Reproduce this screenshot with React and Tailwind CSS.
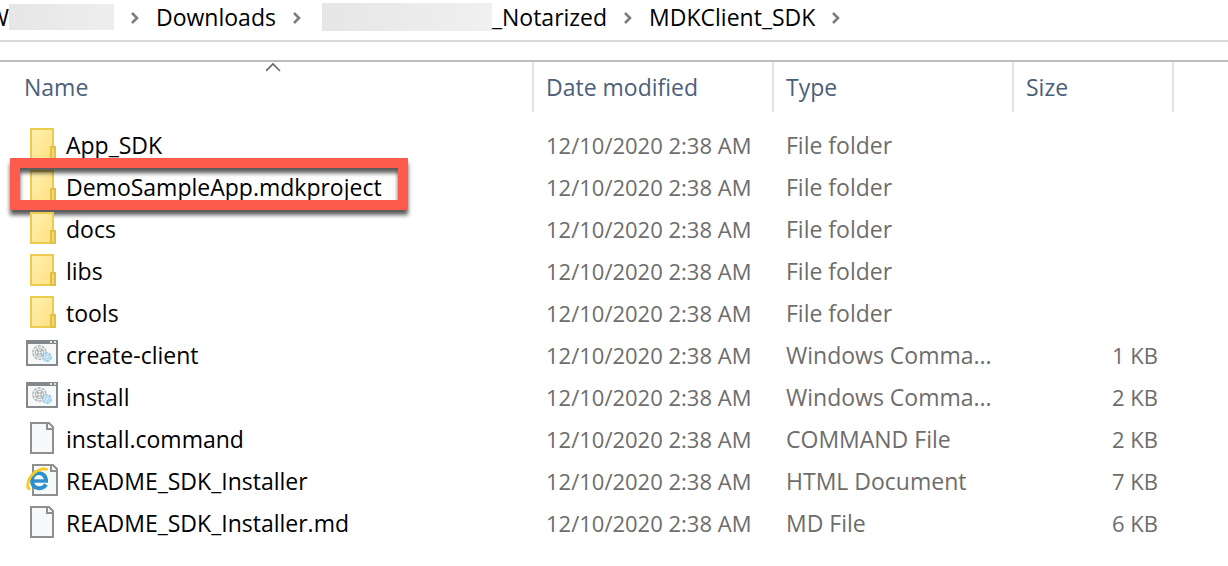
import React from "react";

function FolderIcon() {
  return (
    <svg width="32" height="34" viewBox="0 0 32 34" aria-hidden="true">
      <defs>
        <linearGradient id="folder" x1="0" y1="0" x2="1" y2="1">
          <stop offset="0" stopColor="#fff0b0" />
          <stop offset="1" stopColor="#ffe082" />
        </linearGradient>
      </defs>
      <path d="M5 2H27V32H5Z" fill="url(#folder)" stroke="#ebcb50" strokeWidth="2" />
      <path d="M25 20H29V32H25Z" fill="#f5d673" stroke="#e3bf46" strokeWidth="2" />
    </svg>
  );
}

function CommandIcon() {
  return (
    <svg width="32" height="34" viewBox="0 2 32 34" aria-hidden="true">
      <path d="M1 6H31V30H1Z" fill="#f7f8f8" stroke="#82888c" strokeWidth="2" />
      <path d="M0 5H32V9H0Z" fill="#82888c" />
      <path d="M24 6h2v2h-2zM28 6h2v2h-2z" fill="#dfe3e5" />
      <circle cx="13.500" cy="17.500" r="6.500" fill="#f4f5f5" stroke="#bcc0c2" strokeWidth="2" strokeDasharray="3 1" />
      <circle cx="13.500" cy="17.500" r="4" fill="none" stroke="#b0b4b7" strokeWidth="1.200" />
      <path d="M10.500 14.500L16.500 20.500M16.500 14.500L10.500 20.500" stroke="#a2a7aa" strokeWidth="1.200" />
      <circle cx="13.500" cy="17.500" r="1.600" fill="#fff" stroke="#a2a7aa" />
      <circle cx="21" cy="22" r="4" fill="#cfe9f7" stroke="#9fcce4" strokeWidth="2" strokeDasharray="3 1" />
      <circle cx="21" cy="22" r="1.500" fill="#eef8fd" stroke="#a7d2e8" />
    </svg>
  );
}

function FileIcon() {
  return (
    <svg width="32" height="34" viewBox="0 0 32 34" aria-hidden="true">
      <path d="M5 2H23L27 6V32H5Z" fill="#f8f9fa" stroke="#8f8f8f" strokeWidth="2" />
      <path d="M21 2V8H27" fill="none" stroke="#8f8f8f" strokeWidth="2" />
    </svg>
  );
}

function HtmlIcon() {
  return (
    <svg width="32" height="34" viewBox="0 0 32 34" aria-hidden="true">
      <path d="M7 2H27L31 6V32H7Z" fill="#f8f9fa" stroke="#8f8f8f" strokeWidth="2" />
      <path d="M25 2V8H31" fill="none" stroke="#8f8f8f" strokeWidth="2" />
      <path d="M20 18.500C20.500 7.500 6 7.500 6 17.500C6 27 17 27 20 21.500" fill="none" stroke="#2b8fd0" strokeWidth="4" />
      <path d="M6 18H22" stroke="#2b8fd0" strokeWidth="3.400" />
      <path d="M4 26.500C-1 24 3 13 10 8.500C15 5.500 20 5 21.500 7" fill="none" stroke="#f5cb1c" strokeWidth="2.800" />
    </svg>
  );
}

function Chevron() {
  return (
    <svg className="shrink-0" width="10" height="14" viewBox="0 0 10 14" aria-hidden="true">
      <path d="M2 3L7 8L2 13" fill="none" stroke="#7d7d7d" strokeWidth="2.600" />
    </svg>
  );
}

const icons = { folder: FolderIcon, command: CommandIcon, file: FileIcon, html: HtmlIcon };

const files = [
  { name: "App_SDK", icon: "folder", type: "File folder", size: "" },
  { name: "DemoSampleApp.mdkproject", icon: "folder", type: "File folder", size: "", marked: true },
  { name: "docs", icon: "folder", type: "File folder", size: "" },
  { name: "libs", icon: "folder", type: "File folder", size: "" },
  { name: "tools", icon: "folder", type: "File folder", size: "" },
  { name: "create-client", icon: "command", type: "Windows Comma...", size: "1 KB" },
  { name: "install", icon: "command", type: "Windows Comma...", size: "2 KB" },
  { name: "install.command", icon: "file", type: "COMMAND File", size: "2 KB" },
  { name: "README_SDK_Installer", icon: "html", type: "HTML Document", size: "7 KB" },
  { name: "README_SDK_Installer.md", icon: "file", type: "MD File", size: "6 KB" },
];

function Breadcrumbs() {
  return (
    <nav aria-label="Path" className="flex h-[42px] items-center gap-4 overflow-hidden border-b-2 border-[#d9d9d9] pb-1.5 text-black">
      <a href="#root" className="flex shrink-0 items-center">
        <span className="flex w-[9px] justify-end">W</span>
        <span className="z-10 h-[26px] w-[105px] bg-gradient-to-r from-[#e6e6e6] to-[#eeeeee]" />
      </a>
      <Chevron />
      <a href="#downloads">Downloads</a>
      <Chevron />
      <a href="#notarized" className="flex shrink-0 items-center pl-1">
        <span className="h-7 w-[170px] bg-gradient-to-r from-[#e6e6e6] to-[#f0f0f0]" />
        _Notarized
      </a>
      <Chevron />
      <a href="#sdk">MDKClient_SDK</a>
      <Chevron />
    </nav>
  );
}

function HeaderCell({ label, sorted }) {
  return (
    <th scope="col" aria-sort={sorted ? "ascending" : undefined} className="relative border-r-2 border-[#e2e2e2] p-0 text-left font-normal">
      <button type="button" className={sorted ? "block h-[50px] w-full pl-6 text-left" : "block h-[50px] w-full pl-3 text-left"}>
        {label}
      </button>
      {sorted && (
        <svg className="absolute left-1/2 top-0" width="16" height="10" viewBox="0 0 16 10" aria-hidden="true">
          <path d="M0 9L7 2L14 9" fill="none" stroke="#666" strokeWidth="1.600" />
        </svg>
      )}
    </th>
  );
}

function FileRow({ file }) {
  const Icon = icons[file.icon];
  return (
    <tr className="h-[42px]">
      <td className="relative p-0">
        <div className="flex items-center gap-2 pl-[26px] text-black">
          <Icon />
          <span className="pt-0.5">{file.name}</span>
        </div>
        {file.marked && (
          <div className="absolute -top-[7px] left-[10px] h-[52px] w-[398px] border-[10px] border-[#ff5b4c] drop-shadow-[0_5px_2px_rgba(0,0,0,0.65)]" />
        )}
      </td>
      <td className="p-0 pl-3 pt-0.5 text-[22px]">12/10/2020 2:38 AM</td>
      <td className="truncate p-0 pl-3 pt-0.5">{file.type}</td>
      <td className="p-0 pr-4 pt-0.5 text-right text-[22px]">{file.size}</td>
      <td className="p-0" />
    </tr>
  );
}

export default function App() {
  return (
    <main className="min-h-screen bg-white font-['Open_Sans','Noto_Sans',sans-serif] text-[23px] leading-[30px] text-[#6d6d6d]">
      <Breadcrumbs />
      <div className="mt-[18px] overflow-x-auto border-t-2 border-[#bdbdbd]">
        <table className="w-full table-fixed border-separate border-spacing-0 whitespace-nowrap">
          <colgroup>
            <col className="w-[534px]" />
            <col className="w-[240px]" />
            <col className="w-[240px]" />
            <col className="w-[160px]" />
            <col />
          </colgroup>
          <thead className="text-[#4c607a]">
            <tr>
              <HeaderCell label="Name" sorted />
              <HeaderCell label="Date modified" />
              <HeaderCell label="Type" />
              <HeaderCell label="Size" />
              <td />
            </tr>
          </thead>
          <tbody>
            <tr aria-hidden="true" className="h-[11px]">
              <td colSpan={5} className="p-0" />
            </tr>
            {files.map((file) => (
              <FileRow key={file.name} file={file} />
            ))}
          </tbody>
        </table>
      </div>
    </main>
  );
}
